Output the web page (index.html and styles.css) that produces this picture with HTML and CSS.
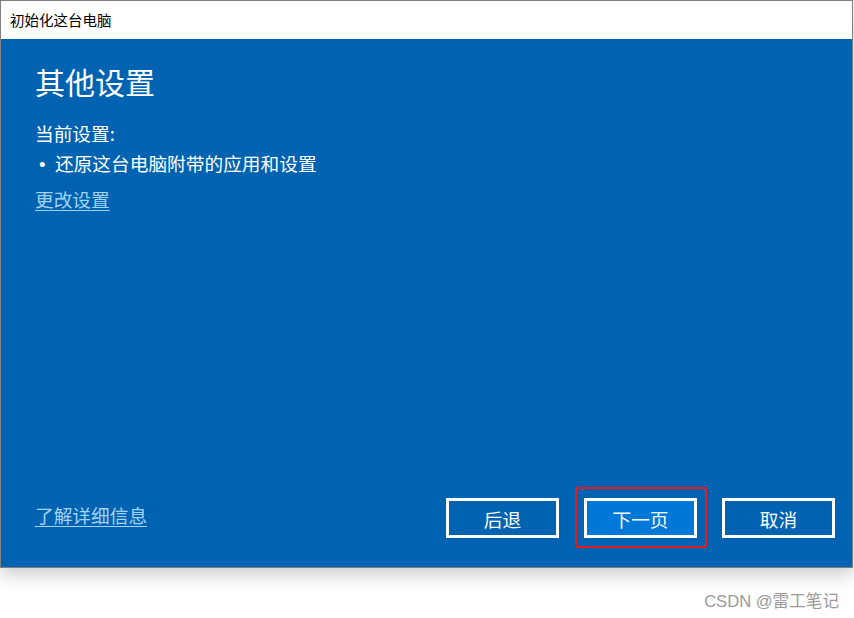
FILE: index.html
```html
<!DOCTYPE html>
<html lang="zh-CN">

<head>
  <meta charset="UTF-8">
  <title>初始化这台电脑</title>
  <link rel="stylesheet" href="styles.css">
</head>

<body>
  <div class="janela">
    <!-- Barra de título -->
    <div class="barra-titulo">初始化这台电脑</div>

    <!-- Conteúdo azul -->
    <div class="painel">
      <div class="conteudo">
        <h1>其他设置</h1>
        <p class="rotulo">当前设置:</p>
        <ul class="lista">
          <li>还原这台电脑附带的应用和设置</li>
        </ul>
        <a href="#" class="link">更改设置</a>
      </div>

      <div class="rodape">
        <a href="#" class="link">了解详细信息</a>
        <div class="botoes">
          <button class="botao">后退</button>
          <button class="botao primario destaque">下一页</button>
          <button class="botao">取消</button>
        </div>
      </div>
    </div>
  </div>

  <div class="marca">CSDN @雷工笔记</div>
</body>

</html>
```

FILE: styles.css
```css
/* Estilos Gerais */
body {
  margin: 0;
  background: #fff;
  font-family: "Noto Sans CJK SC", "Noto Sans", sans-serif;
}

.janela {
  width: 853px;
  box-sizing: border-box;
  border: 1px solid #808080;
  box-shadow: 0 6px 18px rgba(0, 0, 0, 0.22);
}

.barra-titulo {
  height: 38px;
  line-height: 38px;
  padding-left: 9px;
  font-size: 14.5px;
  color: #000;
  background: #fff;
}

/* Painel azul */
.painel {
  height: 528px;
  box-sizing: border-box;
  background: #0063b1;
  color: #fff;
  padding: 22px 17px 29px 34px;
  display: flex;
  flex-direction: column;
  justify-content: space-between;
}

h1 {
  margin: 0;
  font-size: 30px;
  line-height: 40px;
  font-weight: normal;
}

.rotulo {
  margin: 17px 0 0;
  font-size: 18.7px;
  line-height: 30px;
}

.lista {
  list-style: none;
  margin: 0;
  padding: 0;
  font-size: 18.7px;
  line-height: 30px;
}

.lista li::before {
  content: "•";
  display: inline-block;
  width: 16px;
  padding-left: 4px;
  font-family: "Liberation Sans", sans-serif;
}

.link {
  display: inline-block;
  margin-top: 4px;
  font-size: 18.7px;
  line-height: 30px;
  color: #a3d2f5;
  text-decoration: underline;
  text-underline-offset: 3px;
}

/* Rodapé com botões */
.rodape {
  display: flex;
  justify-content: space-between;
  align-items: center;
}

.rodape .link {
  margin-top: 0;
  position: relative;
  top: -3px;
}

.botoes {
  display: flex;
  gap: 25px;
}

.botao {
  width: 113px;
  height: 40px;
  box-sizing: border-box;
  border: 3px solid #fff;
  background: transparent;
  color: #fff;
  font-family: inherit;
  font-size: 18.7px;
  padding: 0;
}

.botao.primario {
  background: #0078d7;
}

/* Moldura vermelha de anotação */
.destaque {
  position: relative;
}

.destaque::after {
  content: "";
  position: absolute;
  top: -14px;
  bottom: -13px;
  left: -12px;
  right: -13px;
  border: 2px solid #e8191b;
  border-radius: 2px;
}

/* Marca d'água */
.marca {
  text-align: right;
  padding: 20px 15px 0 0;
  font-size: 16.6px;
  font-family: "Liberation Sans", "Noto Sans CJK SC", sans-serif;
  color: #9a9a9a;
}
```
